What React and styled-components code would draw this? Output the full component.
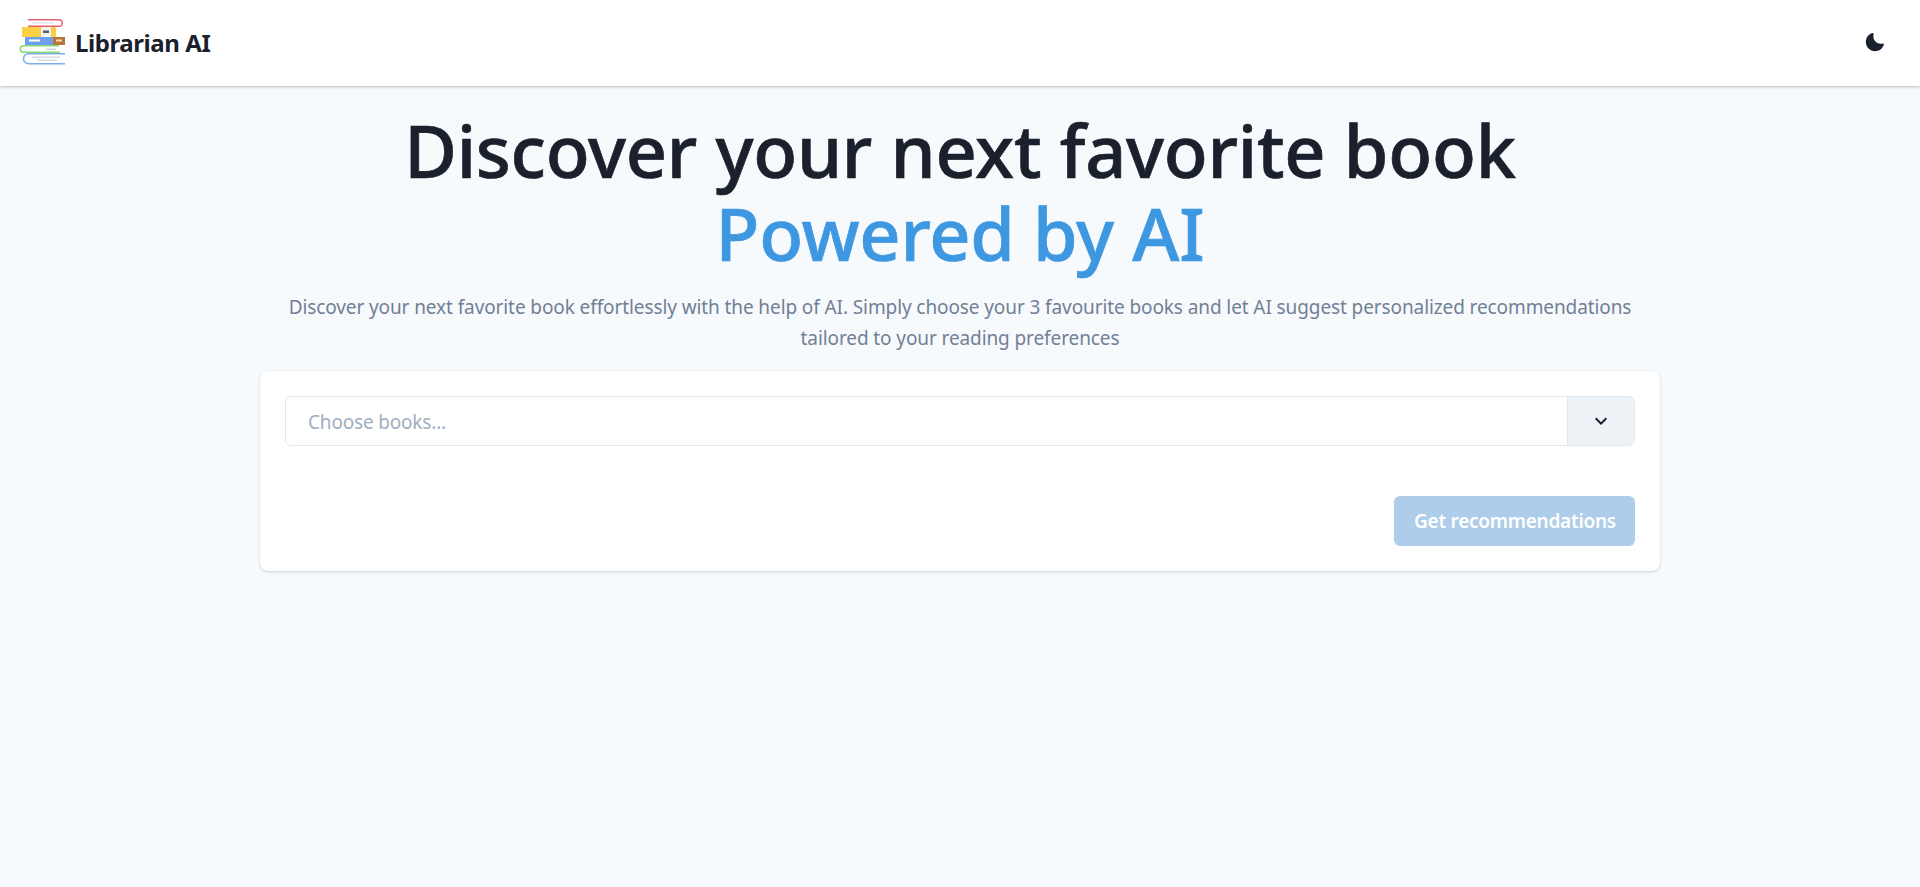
import React from 'react';
import styled, { createGlobalStyle } from 'styled-components';

const GlobalStyle = createGlobalStyle`
    html, body {
        margin: 0;
        padding: 0;
        background: #F7FAFC;
    }
    body {
        font-family: "Noto Sans", "Open Sans", sans-serif;
        color: #1A202C;
    }
    * {
        box-sizing: border-box;
    }
`;

const Page = styled.div`
    min-height: 887px;
    background: #F7FAFC;
`;

const Header = styled.header`
    height: 86px;
    padding: 0 20px 2px 19px;
    background: #fff;
    display: flex;
    align-items: center;
    justify-content: space-between;
    box-shadow: 0 1px 3px rgba(0, 0, 0, 0.2), 0 1px 2px rgba(0, 0, 0, 0.06);
`;

const Brand = styled.div`
    display: flex;
    align-items: center;
    gap: 8px;
`;

const BrandName = styled.span`
    font-size: 24px;
    font-weight: 700;
    letter-spacing: -0.42px;
`;

const ThemeToggle = styled.button`
    width: 40px;
    height: 40px;
    margin-right: 5px;
    padding: 0;
    border: 0;
    background: transparent;
    color: #1A202C;
    display: flex;
    align-items: center;
    justify-content: center;
`;

const Main = styled.main`
    width: 1400px;
    margin: 0 auto;
    padding-top: 23px;
`;

const Title = styled.h1`
    margin: 0;
    font-size: 72px;
    font-weight: 500;
    line-height: 83px;
    text-align: center;
    letter-spacing: -0.25px;
    -webkit-text-stroke: 0.7px currentColor;
`;

const Accent = styled.span`
    display: block;
    color: #3E97E1;
`;

const Subtitle = styled.p`
    margin: 17px 0 0;
    font-size: 19px;
    line-height: 31px;
    text-align: center;
    color: #718096;
    letter-spacing: -0.1px;
`;

const Card = styled.section`
    margin-top: 17px;
    padding: 25px;
    height: 200px;
    background: #fff;
    border-radius: 8px;
    box-shadow: 0 1px 3px rgba(0, 0, 0, 0.12), 0 1px 2px rgba(0, 0, 0, 0.06);
`;

const Select = styled.div`
    height: 50px;
    display: flex;
    border: 1px solid #E2E8F0;
    border-radius: 6px;
    overflow: hidden;
`;

const Placeholder = styled.div`
    flex: 1;
    padding-left: 22px;
    padding-top: 1px;
    display: flex;
    align-items: center;
    font-size: 19px;
    letter-spacing: -0.18px;
    color: #A0AEC0;
`;

const SelectToggle = styled.div`
    width: 67px;
    background: #EDF2F7;
    border-left: 1px solid #E2E8F0;
    display: flex;
    align-items: center;
    justify-content: center;
`;

const Actions = styled.div`
    margin-top: 50px;
    display: flex;
    justify-content: flex-end;
`;

const SubmitButton = styled.button`
    width: 241px;
    height: 50px;
    padding: 0 0 0 1px;
    border: 0;
    border-radius: 6px;
    background: #AECDEB;
    color: #fff;
    font-family: inherit;
    font-size: 19px;
    font-weight: 600;
    letter-spacing: -0.26px;
`;

const BooksLogo = () => (
    <svg width="48" height="48" viewBox="0 0 48 48" fill="none">
        <path d="M9 1.7H40a3.3 3.3 0 0 1 0 6.6H9" stroke="#E8606E" strokeWidth="1.4" fill="#fff" />
        <rect x="13" y="4" width="22" height="1.5" fill="#DCE4EC" />
        <rect x="3" y="9" width="34" height="10" fill="#FBD143" />
        <rect x="22" y="9" width="10" height="10" fill="#F4F4F2" />
        <rect x="24" y="12.5" width="6" height="2.5" fill="#55606C" />
        <rect x="6" y="19" width="28" height="8" fill="#6E9FF0" />
        <rect x="10" y="21.5" width="11" height="2" fill="#fff" />
        <rect x="34" y="19" width="12" height="8" fill="#B8743A" />
        <rect x="37" y="21.5" width="6" height="2" fill="#F0D9B8" />
        <path d="M40 27.8H4.5a3.2 3.2 0 0 0 0 6.4H41" stroke="#86DB72" strokeWidth="1.5" fill="#fff" />
        <rect x="27" y="30.5" width="10" height="1.5" fill="#CFD8E2" />
        <path d="M46 35.8H9.5a5 5 0 0 0 0 10H46" stroke="#7FACEC" strokeWidth="1.5" fill="#fff" />
        <rect x="13" y="38.5" width="28" height="1.5" fill="#D4DCE6" />
        <rect x="18" y="41.5" width="20" height="1.5" fill="#D4DCE6" />
    </svg>
);

const MoonIcon = () => (
    <svg width="20" height="20" viewBox="0 0 24 24" fill="currentColor">
        <path d="M21.4 13.7C20.6 13.9 19.8 14 19 14c-5 0-9-4-9-9 0-.8.1-1.6.3-2.4.1-.3 0-.7-.3-1-.3-.3-.6-.4-1-.3C4.3 2.7 1 7.1 1 12c0 6.1 4.9 11 11 11 4.9 0 9.3-3.3 10.6-8.1.1-.3 0-.7-.3-1-.2-.2-.6-.3-.9-.2z" />
    </svg>
);

const ChevronIcon = () => (
    <svg width="24" height="24" viewBox="0 0 24 24" fill="currentColor">
        <path d="M16.59 8.59L12 13.17 7.41 8.59 6 10l6 6 6-6z" />
    </svg>
);

export default function App() {
    return (
        <Page>
            <GlobalStyle />
            <Header>
                <Brand>
                    <BooksLogo />
                    <BrandName>Librarian AI</BrandName>
                </Brand>
                <ThemeToggle aria-label="Toggle theme">
                    <MoonIcon />
                </ThemeToggle>
            </Header>
            <Main>
                <Title>
                    Discover your next favorite book
                    <Accent>Powered by AI</Accent>
                </Title>
                <Subtitle>
                    Discover your next favorite book effortlessly with the help of AI. Simply choose your 3 favourite books and let AI suggest personalized recommendations
                    <br />
                    tailored to your reading preferences
                </Subtitle>
                <Card>
                    <Select>
                        <Placeholder>Choose books...</Placeholder>
                        <SelectToggle>
                            <ChevronIcon />
                        </SelectToggle>
                    </Select>
                    <Actions>
                        <SubmitButton disabled>Get recommendations</SubmitButton>
                    </Actions>
                </Card>
            </Main>
        </Page>
    );
}
